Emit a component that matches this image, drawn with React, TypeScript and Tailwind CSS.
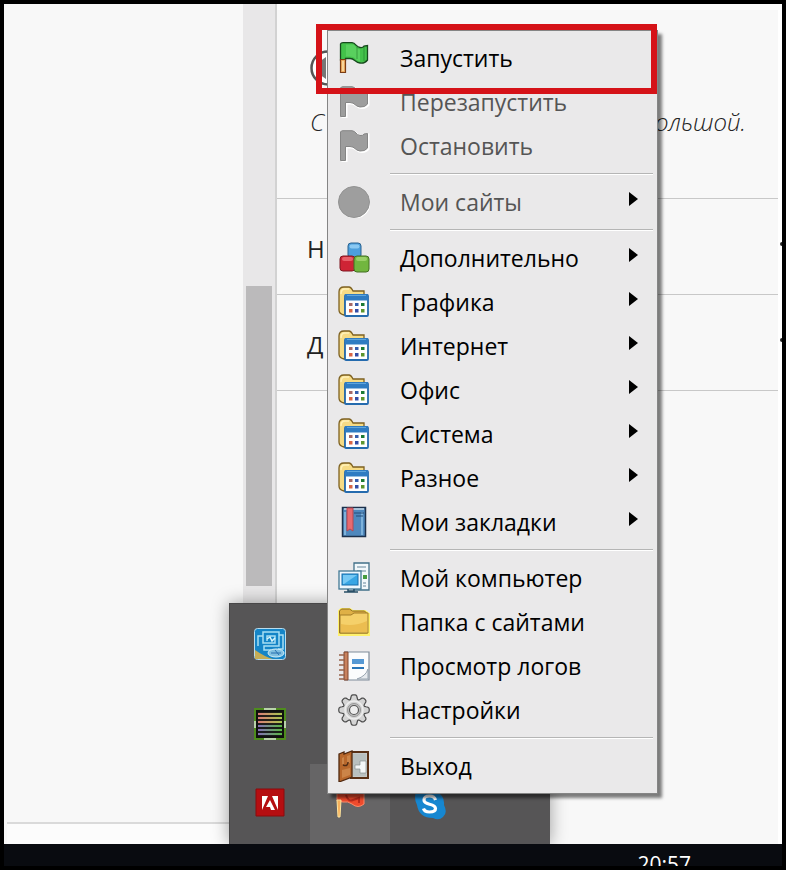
import React from "react";

type IconName =
  | "start"
  | "flagGray"
  | "disc"
  | "cubes"
  | "programs"
  | "bookmark"
  | "computer"
  | "folder"
  | "logs"
  | "gear"
  | "exit";

type Entry = { label: string; icon: IconName; disabled?: boolean; submenu?: boolean };

const groups: Entry[][] = [
  [
    { label: "Запустить", icon: "start" },
    { label: "Перезапустить", icon: "flagGray", disabled: true },
    { label: "Остановить", icon: "flagGray", disabled: true },
  ],
  [{ label: "Мои сайты", icon: "disc", disabled: true, submenu: true }],
  [
    { label: "Дополнительно", icon: "cubes", submenu: true },
    { label: "Графика", icon: "programs", submenu: true },
    { label: "Интернет", icon: "programs", submenu: true },
    { label: "Офис", icon: "programs", submenu: true },
    { label: "Система", icon: "programs", submenu: true },
    { label: "Разное", icon: "programs", submenu: true },
    { label: "Мои закладки", icon: "bookmark", submenu: true },
  ],
  [
    { label: "Мой компьютер", icon: "computer" },
    { label: "Папка с сайтами", icon: "folder" },
    { label: "Просмотр логов", icon: "logs" },
    { label: "Настройки", icon: "gear" },
  ],
  [{ label: "Выход", icon: "exit" }],
];

const flagPath = "M2.5 2 Q3 0.7 5 0.7 H14 C18 1 18 5 22 5.5 Q25 6 26 4 L29.5 3.5 V18 Q27 21.5 22 21 C17 20.5 17 16.500 12 16.500 H7.500";

const gearPath = (() => {
  const points: string[] = [];
  for (let i = 0; i < 96; i++) {
    const a = (i / 96) * Math.PI * 2;
    const r = 12.800 + 2.500 * Math.tanh(1.600 * (Math.cos(8 * a) + 0.400));
    points.push(`${(16 + r * Math.sin(a)).toFixed(2)} ${(16 - r * Math.cos(a)).toFixed(2)}`);
  }
  return `M${points.join("L")}Z`;
})();

function Glyph({ name }: { name: IconName }) {
  switch (name) {
    case "start":
      return (
        <>
          <path d={`${flagPath} V18 H2.500Z`} fill="#43c24a" stroke="#17491d" strokeWidth="1.300" />
          <path d="M8 2.500h6c4 0 3 4 8 5v12c-5-1-4-5-10-5H8z" fill="#6bdd70" opacity=".55" />
          <path d="M19 5v12M26 5v14" stroke="#237d2a" strokeWidth="1" opacity=".6" />
          <path d="M2.500 17.500h5v13h-5z" fill="#f0ad60" stroke="#7b3c14" strokeWidth="1.200" />
          <path d="M5 19v10" stroke="#fbe3ae" strokeWidth="1.500" />
        </>
      );
    case "flagGray":
      return (
        <>
          <path d={`${flagPath} V31 H3.500 V3Z`} fill="none" stroke="#fff" strokeWidth="2" transform="translate(1 1)" />
          <path d={`${flagPath} V30.500 H2.500Z`} fill="#9d9d9d" stroke="#858585" />
        </>
      );
    case "disc":
      return (
        <>
          <circle cx="17" cy="17" r="15.500" fill="#fff" />
          <circle cx="16" cy="16" r="15.500" fill="#9e9e9e" stroke="#929292" />
        </>
      );
    case "cubes":
      return (
        <>
          <rect x="10" y="1" width="13" height="15" rx="3" fill="#4d9fdc" stroke="#2b6390" />
          <rect x="11.500" y="2.500" width="10" height="4" rx="2" fill="#8bc9f2" />
          <rect x="2" y="14" width="15" height="15" rx="3" fill="#cf2435" stroke="#7f1720" />
          <rect x="4" y="15" width="11" height="4" rx="2" fill="#e8606a" />
          <rect x="16" y="14" width="15" height="16" rx="3" fill="#72b63f" stroke="#426f22" />
          <rect x="18" y="15" width="11" height="4" rx="2" fill="#9bd068" />
        </>
      );
    case "programs":
      return (
        <>
          <path d="M6 29Q1 28 1 24V6Q1 1 6 1h5q2 0 4 4h11v8H7v16z" fill="#f6db85" stroke="#7d6020" strokeWidth="1.300" />
          <path d="M3 8q0-5 4-5h4" stroke="#fff1b8" strokeWidth="1.500" fill="none" />
          <rect x="7" y="9" width="23" height="21" rx="1" fill="#fff" stroke="#256bae" strokeWidth="1.800" />
          <path d="M7 8h23v6.500H7z" fill="#2f7cc2" />
          <path d="M9 9.500h19" stroke="#5fa5db" />
          <path d="M11 17h3.500v3H11z" fill="#a46867" />
          <path d="M17 17h3.500v3H17z" fill="#365fae" />
          <path d="M23 17h3.500v3H23z" fill="#1b7a34" />
          <path d="M11 23h3.500v3.500H11z" fill="#d86545" />
          <path d="M17 23h3.500v3.500H17z" fill="#344da5" />
          <path d="M23 23h3.500v3.500H23z" fill="#5b952e" />
        </>
      );
    case "bookmark":
      return (
        <>
          <rect x="4.500" y="1.500" width="23" height="29" fill="#4f88bd" stroke="#1c304b" strokeWidth="1.500" />
          <path d="M6 3h20" stroke="#c7dbe9" strokeWidth="1.500" />
          <path d="M7 6v23M24 6v23" stroke="#7db2db" strokeWidth="2" />
          <path d="M16 7h10M18 10h7" stroke="#254b77" />
          <path d="M9 2h6v23l-3-2-3 2z" fill="#e76a70" stroke="#b64650" />
        </>
      );
    case "computer":
      return (
        <>
          <path d="M16 1h15v27H16z" fill="#f2f8fb" stroke="#427089" strokeWidth="1.300" />
          <path d="M19 5h9M19 9h9M25 21h3M25 24h3" stroke="#66869a" />
          <path d="M25 13h4v4h-4z" fill="#459c3e" />
          <rect x="1" y="9" width="22" height="18" fill="#edf7fd" stroke="#427994" strokeWidth="1.300" />
          <rect x="4" y="12" width="16" height="11" fill="#38a6e4" stroke="#176daa" />
          <path d="M5 13h14l-13 9H5z" fill="#76c9f4" />
          <path d="M10 27v2h6v-2M6 30h14" stroke="#294f67" strokeWidth="1.500" fill="none" />
        </>
      );
    case "folder":
      return (
        <>
          <path d="M1 29V5l2-2h9l3 2h12l4 3v21z" fill="#fff16d" stroke="#fff16d" strokeWidth="2" />
          <path d="M1.500 27V5l2-2h8l3 2h12l3 3v19z" fill="#dfb046" stroke="#8c6b20" />
          <path d="M2 9h11l3-2h14v20H2z" fill="#f5d06a" stroke="#a37c28" />
          <path d="M3 18q13 3 26-3v11H3z" fill="#ecbd50" />
        </>
      );
    case "logs":
      return (
        <>
          <path d="M7 2h24v28H7z" fill="#fbfcfd" stroke="#7e8b99" strokeWidth="1.200" />
          <path d="M6 2h4v28H6z" fill="#c9825e" stroke="#81462f" />
          <path d="M1 5h6M1 10h6M1 15h6M1 20h6M1 25h6M1 29h6" stroke="#98634b" strokeWidth="1.500" />
          <path d="M14 9h12v5H14z" fill="#5598d4" />
          <path d="M14 18h12" stroke="#2875b9" strokeWidth="2" />
          <path d="M19 29q9-3 11-10v10z" fill="#e6eaee" stroke="#99a5b1" />
        </>
      );
    case "gear":
      return (
        <>
          <path d={gearPath} fill="#d4d4d4" stroke="#4c4c4c" strokeWidth="1.200" />
          <circle cx="16" cy="16" r="9" fill="none" stroke="#ededed" strokeWidth="1.500" />
          <circle cx="16" cy="16" r="6.500" fill="#c1c1c1" stroke="#969696" />
          <circle cx="16" cy="16" r="4.500" fill="#eee" stroke="#555" strokeWidth="1.200" />
        </>
      );
    case "exit":
      return (
        <>
          <path d="M13 2h17v26H13z" fill="#c5c8c6" stroke="#583016" strokeWidth="2" />
          <path d="M15 4h13v22H15z" fill="#b9c0bf" />
          <path d="M17 15h5v-4h6v12h-6v-4h-5z" fill="#f4f7f7" stroke="#87908f" strokeWidth=".7" />
          <path d="M1 4l5-2v2l8-3v26L1 32z" fill="#b8682c" stroke="#4f2810" strokeWidth="1.300" />
          <path d="M4 8l2-1v7H4zM9 6l3-1v8H9zM4 20l8-2v7l-8 3z" fill="#cb8448" />
          <path d="M5 15q5 2 5-3" fill="none" stroke="#502c15" strokeWidth="1.500" />
        </>
      );
  }
}

function MenuRow({ label, icon, disabled, submenu }: Entry) {
  return (
    <button
      type="button"
      role="menuitem"
      disabled={disabled}
      aria-haspopup={submenu ? "menu" : undefined}
      className="flex h-11 w-full items-center pr-[18px] pl-2.5 text-left text-black disabled:text-[#555555]"
    >
      <svg viewBox="0 0 32 32" className="size-8 shrink-0" aria-hidden="true">
        <Glyph name={icon} />
      </svg>
      <span className="ml-[30px] flex-1 whitespace-nowrap">{label}</span>
      {submenu && (
        <svg viewBox="0 0 10 22" className="h-[22px] w-2.5" aria-hidden="true">
          <path d="M0 1 9 8 0 15Z" fill="#000" />
        </svg>
      )}
    </button>
  );
}

function ContextMenu() {
  return (
    <div
      role="menu"
      className="absolute top-[26px] left-[323px] w-[331px] border border-[#858585] bg-[#eae9ea] py-[5px] text-[23px] leading-8 shadow-[4px_4px_3px_#00000080]"
    >
      {groups.map((items, i) => (
        <React.Fragment key={i}>
          {i > 0 && (
            <div role="separator" className="flex h-3 items-center pr-1 pl-[62px]">
              <div className="h-0.5 flex-1 border-t border-[#b5b5b5] bg-white" />
            </div>
          )}
          {items.map((item) => (
            <MenuRow key={item.label} {...item} />
          ))}
        </React.Fragment>
      ))}
    </div>
  );
}

function IntelIcon() {
  return (
    <svg viewBox="0 0 32 32" className="size-8" aria-hidden="true">
      <rect x=".5" y=".5" width="31" height="31" rx="3" fill="#1585c7" stroke="#b8dced" />
      <path d="M1 22q10 7 18 9H1z" fill="#c5ad55" />
      <path d="M4 18V8h5V4h16v14H10v4h7M9 8v7h12V8h-8v5M25 7h4v14h-5" fill="none" stroke="#a7def4" strokeWidth="1.500" />
      <path d="M13 11l3-2 2 4 3-3" stroke="#d8f5fb" fill="none" strokeWidth="1.500" />
      <ellipse cx="22" cy="25" rx="8" ry="4" fill="#80bfe0" stroke="#d3eff8" />
      <path d="M17 25h10M21 22l4 5" stroke="#286fae" />
    </svg>
  );
}

function MeterIcon() {
  const rows = [6, 10, 14, 18, 22, 26];
  return (
    <svg viewBox="0 0 32 32" className="size-8" aria-hidden="true">
      <defs>
        <linearGradient id="meter" gradientUnits="userSpaceOnUse" x1="4" y1="0" x2="28" y2="0">
          <stop offset="0" stopColor="#dc7c78" />
          <stop offset="1" stopColor="#a8c94f" />
        </linearGradient>
        <linearGradient id="meterLow" gradientUnits="userSpaceOnUse" x1="4" y1="0" x2="28" y2="0">
          <stop offset="0" stopColor="#8670b8" />
          <stop offset="1" stopColor="#59ba43" />
        </linearGradient>
      </defs>
      <rect x="1" y="1" width="30" height="30" fill="#101010" stroke="#4e8c1d" strokeWidth="2" />
      <path d="M10 1h12M10 31h12M1 13v7M31 13v7" stroke="#dce9d8" strokeWidth="1.500" />
      {rows.map((y, i) => (
        <path key={y} d={`M4 ${y}h24`} stroke={i < 3 ? "url(#meter)" : "url(#meterLow)"} strokeWidth="2.200" />
      ))}
    </svg>
  );
}

function AdobeIcon() {
  return (
    <svg viewBox="0 0 32 32" className="size-8" aria-hidden="true">
      <path d="M2 1h28v27H2z" fill="#b50e11" stroke="#8b0b0d" />
      <path d="M8 8h6L8 22zM24 8h-6l6 14zM16 12l5 10h-4l-1-3h-4z" fill="#fff" />
    </svg>
  );
}

function RedFlagIcon() {
  return (
    <svg viewBox="0 0 32 32" className="size-8" aria-hidden="true">
      <path d="M3 1h12q5 4 11 2l4-1v14q-6 5-12 0-4-3-9-2l-6-1z" fill="#ee4b2d" stroke="#ff8a68" />
      <path d="M12 7q2 7 7 5l6-2v5" stroke="#b92b1c" strokeWidth="2" fill="none" />
      <path d="M3 12h4l-1 17H4z" fill="#f7b15c" stroke="#ffe6a0" />
    </svg>
  );
}

function SkypeIcon() {
  return (
    <svg viewBox="0 0 32 32" className="size-8" aria-hidden="true">
      <path d="M3 2Q13-3 21 3q10 4 9 14 4 8-1 12-4 4-10 1Q5 30 3 17-1 9 3 2z" fill="#1687d1" />
      <path
        d="M21.500 12q-1-4-6-4-5.500 0-5.500 4 0 3 5.500 4.200 6 1.300 6 4.300 0 3.500-6 3.500-5 0-6-3.500"
        fill="none"
        stroke="#fff"
        strokeWidth="3.200"
      />
    </svg>
  );
}

function Tray() {
  const icons = [
    { name: "Графика Intel", node: <IntelIcon />, place: "col-start-1 row-start-1" },
    { name: "Монитор", node: <MeterIcon />, place: "col-start-1 row-start-2" },
    { name: "Adobe", node: <AdobeIcon />, place: "col-start-1 row-start-3" },
    { name: "Сервер", node: <RedFlagIcon />, place: "col-start-2 row-start-3 bg-[#666566]" },
    { name: "Skype", node: <SkypeIcon />, place: "col-start-3 row-start-3" },
  ];
  return (
    <div className="absolute bottom-0 left-[225px] grid grid-cols-[repeat(4,80px)] grid-rows-[repeat(3,80px)] border-t border-l border-[#484748] bg-[#565556] shadow-[0_0_16px_#00000060]">
      {icons.map(({ name, node, place }) => (
        <button key={name} type="button" aria-label={name} className={`flex items-center justify-center ${place}`}>
          {node}
        </button>
      ))}
    </div>
  );
}

function PageBehind() {
  return (
    <div className="flex flex-1">
      <div className="flex w-[239px] flex-col justify-end bg-[#f8f8f8]">
        <div className="ml-[3px] h-[22px] border-t-2 border-[#dadada] bg-[#fcfcfc]" />
      </div>
      <div className="w-[34px] border-r-2 border-[#d2d2d2] bg-[#e8e7e8] px-[3px] pt-[282px]">
        <div className="h-[300px] bg-[#bbbabb]" />
      </div>
      <div className="flex-1 border-t-[6px] border-r-4 border-white bg-[#f8f8f8] text-[#222222]">
        <div className="h-[189px] border-b border-[#c8c8c8] pt-10 pr-8 pl-[33px]">
          <svg viewBox="0 0 36 36" className="size-9" aria-hidden="true">
            <circle cx="18" cy="18" r="16.500" fill="#fff" stroke="#555" strokeWidth="2.500" />
            <path d="M9 12v12l7 5V7z" fill="#777" />
          </svg>
          <p className="mt-5 flex justify-between text-2xl leading-8 font-light italic">
            <span>С</span>
            <span>большой.</span>
          </p>
        </div>
        {["Н", "Д"].map((letter) => (
          <div
            key={letter}
            className="flex h-24 items-center justify-between border-b border-[#c8c8c8] pt-1 pl-[30px] text-2xl leading-8"
          >
            <span>{letter}</span>
            <svg viewBox="0 0 3 16" className="-mr-1 h-4 w-[3px]" aria-hidden="true">
              <circle cx="3" cy="3" r="2" fill="#222" />
            </svg>
          </div>
        ))}
      </div>
    </div>
  );
}

export default function App() {
  return (
    <div className="flex min-h-screen flex-col border-4 border-black bg-black font-['Open_Sans','Noto_Sans',sans-serif]">
      <main className="relative flex min-h-[840px] flex-1 flex-col overflow-hidden bg-[#f8f8f8]">
        <PageBehind />
        <Tray />
        <ContextMenu />
        <div className="pointer-events-none absolute top-5 left-[312px] h-[70px] w-[341px] border-6 border-[#d51218]" />
      </main>
      <footer className="flex h-[22px] justify-end overflow-hidden bg-[#090b10] pt-1.5 pr-[91px] text-[21px] leading-7 text-white">
        <time>20:57</time>
      </footer>
    </div>
  );
}
